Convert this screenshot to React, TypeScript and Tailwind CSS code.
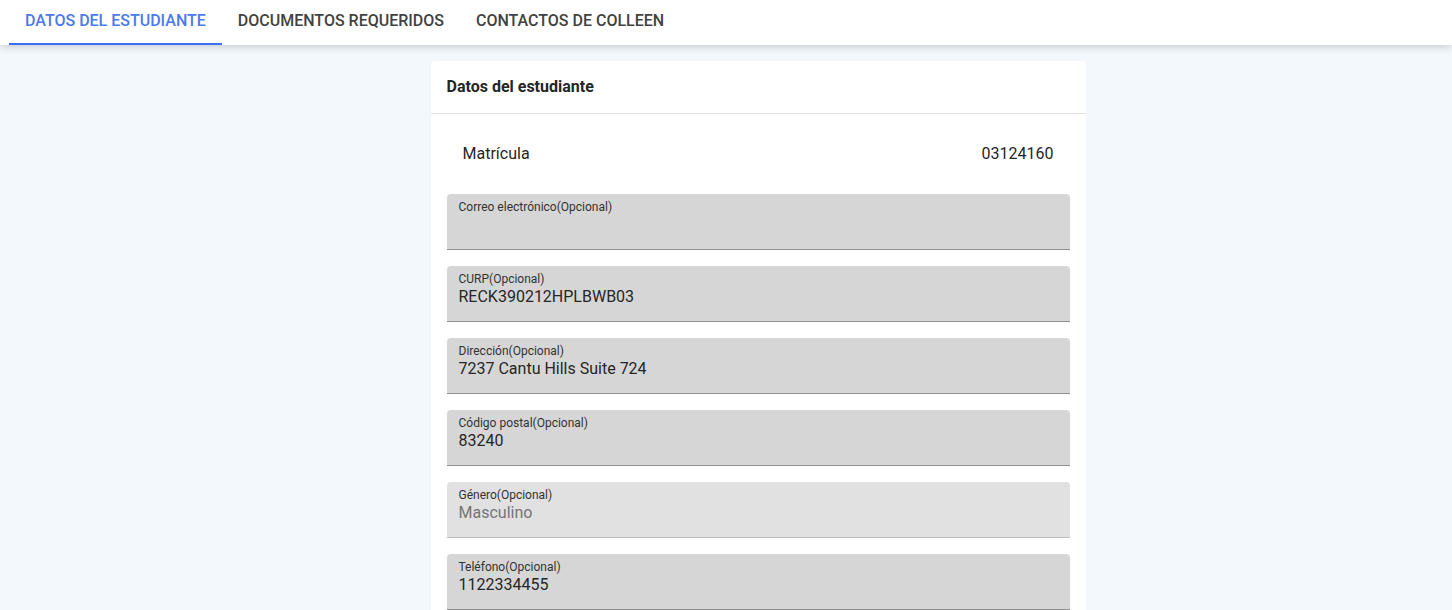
import { useState } from "react";

const TABS = ["Datos del estudiante", "Documentos requeridos", "Contactos de Colleen"];

type Field = {
  label: string;
  value: string;
  disabled?: boolean;
};

const FIELDS: Field[] = [
  { label: "Correo electrónico(Opcional)", value: "" },
  { label: "CURP(Opcional)", value: "RECK390212HPLBWB03" },
  { label: "Dirección(Opcional)", value: "7237 Cantu Hills Suite 724" },
  { label: "Código postal(Opcional)", value: "83240" },
  { label: "Género(Opcional)", value: "Masculino", disabled: true },
  { label: "Teléfono(Opcional)", value: "1122334455" },
];

function FilledField({ label, value, disabled }: Field) {
  return (
    <div
      className={`flex h-14 flex-col rounded-t border-b px-3 pt-[5px] ${
        disabled ? "border-[#bdbdbd] bg-[#e1e1e1]" : "border-[#8f8f8f] bg-[#d6d6d6]"
      }`}
    >
      <span className="text-xs leading-4 text-[#333]">{label}</span>
      <span
        className={`text-base leading-5 ${disabled ? "text-[#757575]" : "text-[#262626]"}`}
      >
        {value}
      </span>
    </div>
  );
}

export default function App() {
  const [activeTab, setActiveTab] = useState(0);

  return (
    <div className="min-h-screen bg-[#f3f8fd] font-['Roboto',sans-serif]">
      <nav className="relative z-10 flex h-[45px] bg-white pl-[9px] shadow-[0_2px_8px_rgba(0,0,0,0.18)]">
        {TABS.map((tab, index) => (
          <button
            key={tab}
            type="button"
            onClick={() => setActiveTab(index)}
            className={`relative flex h-full items-center px-4 pb-1 text-base font-medium uppercase ${
              activeTab === index ? "text-[#4a7af0]" : "text-[#424242]"
            }`}
          >
            {tab}
            {activeTab === index && (
              <span className="absolute bottom-0 left-0 h-[2px] w-full bg-[#3d6ff5]" />
            )}
          </button>
        ))}
      </nav>

      <main className="flex justify-center pl-16 pt-4">
        <section className="w-[655px] rounded bg-white shadow-[0_1px_2px_rgba(0,0,0,0.04)]">
          <header className="flex h-[53px] items-center border-b border-[#e0e0e0] px-4">
            <h2 className="text-base font-bold text-[#262626]">Datos del estudiante</h2>
          </header>

          <div className="flex h-20 items-center justify-between px-8 text-base text-[#262626]">
            <span>Matrícula</span>
            <span>03124160</span>
          </div>

          <div className="flex flex-col gap-4 px-4 pb-4">
            {FIELDS.map((field) => (
              <FilledField key={field.label} {...field} />
            ))}
          </div>
        </section>
      </main>
    </div>
  );
}
